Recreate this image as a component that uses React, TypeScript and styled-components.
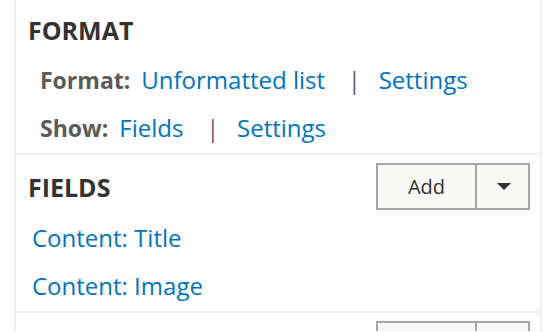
import React from "react";
import styled, { createGlobalStyle } from "styled-components";

const Global = createGlobalStyle`
  html, body { margin: 0; padding: 0; background: #ffffff; }
  body { font-family: "Open Sans", "DejaVu Sans", sans-serif; }
`;

const Column = styled.div`
  margin-left: 14px;
  width: 528px;
  box-sizing: border-box;
  border-left: 2px solid #f0f0f0;
  border-right: 2px solid #f0f0f0;
`;

const Section = styled.section<{ $pt: number }>`
  border-bottom: 2px solid #f0f0f0;
  padding: ${(p) => p.$pt}px 10px 1px 12px;
`;

const Header = styled.div`
  display: flex;
  align-items: center;
  justify-content: space-between;
`;

const Title = styled.h2`
  margin: 0;
  font-size: 25px;
  line-height: 40px;
  font-weight: 700;
  color: #333333;
`;

const Rows = styled.div<{ $indent: number; $gap: number }>`
  margin-top: ${(p) => p.$gap}px;
  padding-left: ${(p) => p.$indent}px;
`;

const Row = styled.div`
  font-size: 24px;
  line-height: 48px;
  white-space: nowrap;
`;

const Label = styled.span`
  font-size: 23px;
  font-weight: 700;
  color: #5a5a5a;
  margin-right: 11px;
`;

const Link = styled.a`
  color: #0074bd;
  text-decoration: none;
`;

const Pipe = styled.span`
  font-size: 23px;
  color: #606060;
  margin: 0 18px 0 23px;
`;

const ButtonGroup = styled.div`
  display: flex;
  height: 47px;
`;

const Btn = styled.button<{ $w: number; $first?: boolean }>`
  box-sizing: border-box;
  width: ${(p) => p.$w}px;
  height: 47px;
  margin: 0;
  padding: 0;
  background: #f9f9f7;
  border: 2px solid #a6a6a6;
  border-left-width: ${(p) => (p.$first ? 2 : 0)}px;
  font-family: "Open Sans", "DejaVu Sans", sans-serif;
  font-size: 20px;
  color: #333333;
  display: flex;
  align-items: center;
  justify-content: center;
`;

const Caret = styled.span`
  width: 0;
  height: 0;
  border-left: 7px solid transparent;
  border-right: 7px solid transparent;
  border-top: 7px solid #333333;
  margin-left: 2px;
`;

const NextHeader = styled.div`
  display: flex;
  justify-content: flex-end;
  padding: 8px 10px 0 12px;
  height: 10px;
  overflow: hidden;
`;

function AddButton({ label }: { label?: string }) {
  return (
    <ButtonGroup>
      <Btn $w={101} $first>{label}</Btn>
      <Btn $w={53}>
        <Caret />
      </Btn>
    </ButtonGroup>
  );
}

export default function App() {
  return (
    <>
      <Global />
      <Column>
        <Section $pt={10}>
          <Title>FORMAT</Title>
          <Rows $indent={12} $gap={6}>
            <Row>
              <Label>Format:</Label>
              <Link href="#">Unformatted list</Link>
              <Pipe>|</Pipe>
              <Link href="#">Settings</Link>
            </Row>
            <Row>
              <Label>Show:</Label>
              <Link href="#">Fields</Link>
              <Pipe>|</Pipe>
              <Link href="#">Settings</Link>
            </Row>
          </Rows>
        </Section>
        <Section $pt={8}>
          <Header>
            <Title>FIELDS</Title>
            <AddButton label="Add" />
          </Header>
          <Rows $indent={4} $gap={4}>
            <Row>
              <Link href="#">Content: Title</Link>
            </Row>
            <Row>
              <Link href="#">Content: Image</Link>
            </Row>
          </Rows>
        </Section>
        <NextHeader>
          <AddButton />
        </NextHeader>
      </Column>
    </>
  );
}
